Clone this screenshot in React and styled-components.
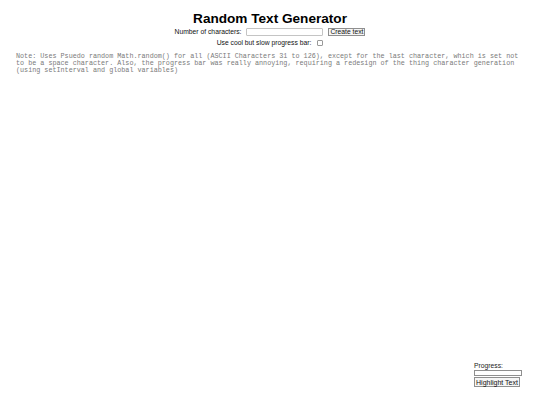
import React from 'react'
import styled, { createGlobalStyle } from 'styled-components'

const GlobalStyle = createGlobalStyle`
  html, body {
    margin: 0;
    padding: 0;
    background: #ffffff;
  }
  body {
    font-family: 'Liberation Sans', Arial, sans-serif;
    color: #000;
  }
`

const Page = styled.div`
  height: 405px;
  display: flex;
  flex-direction: column;
  box-sizing: border-box;
  padding: 11px 16px 18px;
`

const Title = styled.h1`
  margin: 0;
  font-size: 13.6px;
  line-height: 16px;
  font-weight: bold;
  text-align: center;
`

const Row = styled.div`
  display: flex;
  align-items: center;
  justify-content: center;
  gap: ${({ gap }) => gap || '5px'};
  margin-top: ${({ top }) => top || '0'};
  height: ${({ h }) => h || '8px'};
`

const Label = styled.span`
  font-size: 6.75px;
  line-height: 8px;
  white-space: nowrap;
  color: #111;
`

const TextInput = styled.input`
  box-sizing: border-box;
  width: 77px;
  height: 7.5px;
  margin: 0;
  padding: 0;
  border: 1px solid #c4c4c4;
  border-radius: 1px;
  background: #fff;
  outline: none;
`

const Button = styled.button`
  box-sizing: border-box;
  width: ${({ w }) => w || '37px'};
  height: ${({ h }) => h || '8px'};
  margin: ${({ top }) => top || '0'} 0 0;
  padding: 0 2px;
  border: 1px solid #8f8f8f;
  border-radius: 0;
  background: #f6f6f6;
  font-family: 'Liberation Sans', Arial, sans-serif;
  font-size: ${({ size }) => size || '6.75px'};
  line-height: 1;
  color: #111;
  white-space: nowrap;
  display: flex;
  align-items: center;
  justify-content: center;
`

const Checkbox = styled.input`
  appearance: none;
  box-sizing: border-box;
  width: 6px;
  height: 6px;
  margin: 0;
  border: 1px solid #999;
  border-radius: 1px;
  background: #fff;
`

const Note = styled.p`
  margin: 7px 0 0;
  font-family: 'Liberation Mono', 'Courier New', monospace;
  font-size: 6.75px;
  line-height: 7px;
  color: #7a7a7a;
`

const Spacer = styled.div`
  flex: 1;
`

const ProgressPanel = styled.div`
  align-self: flex-end;
  margin-right: 2px;
  display: flex;
  flex-direction: column;
  align-items: flex-start;
  width: 48px;
`

const ProgressLabel = styled.span`
  font-size: 6.75px;
  line-height: 8px;
  color: #222;
`

const ProgressBar = styled.div`
  box-sizing: border-box;
  width: 48px;
  height: 6px;
  border: 1px solid #8f8f8f;
  background: #fff;
`

const Fill = styled.div`
  height: 100%;
  background: #4a90d9;
`

const App = () => {
  const progress = 0

  return (
    <>
      <GlobalStyle />
      <Page>
        <Title>Random Text Generator</Title>
        <Row top="1px" gap="5px">
          <Label>Number of characters:</Label>
          <TextInput type="text" />
          <Button>Create text</Button>
        </Row>
        <Row top="4px" h="6px" gap="6px">
          <Label>Use cool but slow progress bar:</Label>
          <Checkbox type="checkbox" />
        </Row>
        <Note>
          Note: Uses Psuedo random Math.random() for all (ASCII Characters 31 to 126), except
          for the last character, which is set not to be a space character. Also, the progress
          bar was really annoying, requiring a redesign of the thing character generation
          (using setInterval and global variables)
        </Note>
        <Spacer />
        <ProgressPanel>
          <ProgressLabel>Progress:</ProgressLabel>
          <ProgressBar>
            <Fill style={{ width: `${progress}%` }} />
          </ProgressBar>
          <Button w="46px" h="10px" size="7px" top="1px">
            Highlight Text
          </Button>
        </ProgressPanel>
      </Page>
    </>
  )
}

export default App
